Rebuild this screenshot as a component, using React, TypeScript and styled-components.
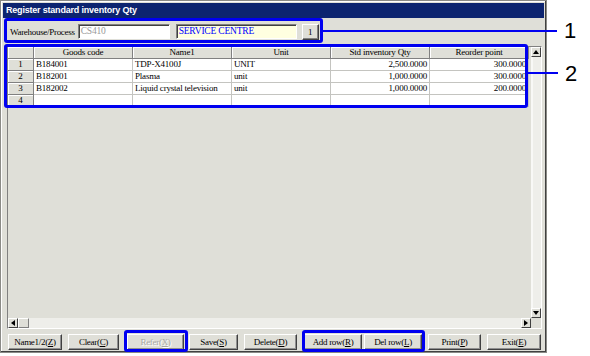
import { Fragment } from 'react';
import styled, { createGlobalStyle } from 'styled-components';

const GlobalStyle = createGlobalStyle`
  html, body {
    margin: 0;
    padding: 0;
    background: #ffffff;
  }
  * {
    box-sizing: border-box;
  }
`;

const GRAY = '#dfdfd8';
const CALLOUT = '#0000f0';

const Page = styled.div`
  position: relative;
  width: 590px;
  height: 356px;
  background: #ffffff;
  overflow: hidden;
`;

const Window = styled.div`
  display: flex;
  flex-direction: column;
  width: 547px;
  height: 353px;
  background: ${GRAY};
  border: 1px solid #8a8a86;
  box-shadow: inset -1px -1px 0 #404040, inset 1px 1px 0 #ffffff;
`;

const TitleBar = styled.div`
  height: 15px;
  margin: 2px 2px 0;
  padding-left: 3px;
  background: #0c2470;
  color: #ffffff;
  font-family: 'Liberation Sans', Arial, sans-serif;
  font-weight: bold;
  font-size: 9px;
  letter-spacing: -0.2px;
  line-height: 15px;
  white-space: nowrap;
`;

const FilterRow = styled.div`
  display: flex;
  align-items: center;
  height: 27px;
  padding-left: 9px;
`;

const Label = styled.span`
  font-family: 'Liberation Serif', 'Times New Roman', serif;
  font-size: 9px;
  letter-spacing: -0.3px;
  color: #000000;
  white-space: nowrap;
`;

const Field = styled.div<{ $w: number; $ml: number; $bg: string; $color: string }>`
  width: ${(p) => p.$w}px;
  height: 15px;
  margin-left: ${(p) => p.$ml}px;
  padding-left: 2px;
  background: ${(p) => p.$bg};
  color: ${(p) => p.$color};
  border-top: 1px solid #808080;
  border-left: 1px solid #808080;
  border-right: 1px solid #ffffff;
  border-bottom: 1px solid #ffffff;
  box-shadow: inset 1px 1px 0 #404040;
  font-family: 'Liberation Serif', 'Times New Roman', serif;
  font-size: 9.5px;
  letter-spacing: -0.2px;
  line-height: 13px;
  white-space: nowrap;
  overflow: hidden;
`;

const SmallButton = styled.div`
  width: 17px;
  height: 16px;
  margin-left: 5px;
  display: flex;
  align-items: center;
  justify-content: center;
  background: ${GRAY};
  border-top: 1px solid #ffffff;
  border-left: 1px solid #ffffff;
  border-right: 1px solid #404040;
  border-bottom: 1px solid #404040;
  box-shadow: inset -1px -1px 0 #808080;
  font-family: 'Liberation Serif', 'Times New Roman', serif;
  font-size: 9px;
`;

const GridFrame = styled.div`
  display: grid;
  grid-template-columns: 1fr 10px;
  grid-template-rows: 1fr 10px;
  width: 535px;
  height: 283px;
  margin: 1px 0 0 6px;
  border-top: 1px solid #808080;
  border-left: 1px solid #808080;
  border-right: 1px solid #ffffff;
  border-bottom: 1px solid #ffffff;
  background: ${GRAY};
`;

const Table = styled.div`
  display: grid;
  grid-template-columns: 26px repeat(5, 99px);
  grid-auto-rows: 12px;
  align-content: start;
  overflow: hidden;
  font-family: 'Liberation Serif', 'Times New Roman', serif;
  font-size: 9px;
  letter-spacing: -0.2px;
`;

const HeadCell = styled.div`
  background: ${GRAY};
  border-right: 1px solid #808080;
  border-bottom: 1px solid #808080;
  box-shadow: inset 1px 1px 0 #ffffff;
  text-align: center;
  line-height: 11px;
  white-space: nowrap;
  overflow: hidden;
`;

const Cell = styled.div<{ $right?: boolean }>`
  background: #ffffff;
  border-right: 1px solid #c4c4c0;
  border-bottom: 1px solid #c4c4c0;
  padding: 0 2px;
  text-align: ${(p) => (p.$right ? 'right' : 'left')};
  line-height: 11px;
  white-space: nowrap;
  overflow: hidden;
`;

const VScroll = styled.div`
  display: flex;
  flex-direction: column;
  justify-content: space-between;
  background: #eeeeea;
  box-shadow: inset 2px 0 0 #f8f8f6;
`;

const HScroll = styled.div`
  display: flex;
  align-items: stretch;
  background: #eeeeea;
`;

const Arrow = styled.div`
  width: 10px;
  height: 10px;
  flex: none;
  display: flex;
  align-items: center;
  justify-content: center;
  background: ${GRAY};
  border-top: 1px solid #ffffff;
  border-left: 1px solid #ffffff;
  border-right: 1px solid #404040;
  border-bottom: 1px solid #404040;
`;

const Thumb = styled.div`
  width: 11px;
  flex: none;
  background: ${GRAY};
  border-top: 1px solid #ffffff;
  border-left: 1px solid #ffffff;
  border-right: 1px solid #808080;
  border-bottom: 1px solid #808080;
`;

const Spacer = styled.div`
  flex: 1;
`;

const Corner = styled.div`
  background: ${GRAY};
`;

const ButtonBar = styled.div`
  display: flex;
  align-items: flex-start;
  padding-top: 5px;
  padding-left: 7px;
`;

const Button = styled.div<{ $w: number; $ml: number; $disabled?: boolean }>`
  width: ${(p) => p.$w}px;
  height: 16px;
  margin-left: ${(p) => p.$ml}px;
  display: flex;
  align-items: center;
  justify-content: center;
  background: ${GRAY};
  border-top: 1px solid #ffffff;
  border-left: 1px solid #ffffff;
  border-right: 1px solid #404040;
  border-bottom: 1px solid #404040;
  box-shadow: inset -1px -1px 0 #909090;
  color: ${(p) => (p.$disabled ? '#a8a8a4' : '#000000')};
  text-shadow: ${(p) => (p.$disabled ? '1px 1px 0 #ffffff' : 'none')};
  font-family: 'Liberation Serif', 'Times New Roman', serif;
  font-size: 9px;
  letter-spacing: -0.3px;
  white-space: nowrap;
  u {
    text-decoration: underline;
  }
`;

const Callout = styled.div<{ $x: number; $y: number; $w: number; $h: number }>`
  position: absolute;
  left: ${(p) => p.$x}px;
  top: ${(p) => p.$y}px;
  width: ${(p) => p.$w}px;
  height: ${(p) => p.$h}px;
  border: 3px solid ${CALLOUT};
  border-radius: 3px;
  pointer-events: none;
`;

const Leader = styled.div<{ $x: number; $y: number; $w: number }>`
  position: absolute;
  left: ${(p) => p.$x}px;
  top: ${(p) => p.$y}px;
  width: ${(p) => p.$w}px;
  height: 2px;
  background: ${CALLOUT};
`;

const Number = styled.div<{ $x: number; $y: number }>`
  position: absolute;
  left: ${(p) => p.$x}px;
  top: ${(p) => p.$y}px;
  font-family: 'Liberation Sans', Arial, sans-serif;
  font-size: 22px;
  line-height: 22px;
  color: #000000;
`;

const TriUp = () => (
  <svg width="6" height="4" viewBox="0 0 6 4">
    <polygon points="3,0 6,4 0,4" fill="#000" />
  </svg>
);
const TriDown = () => (
  <svg width="6" height="4" viewBox="0 0 6 4">
    <polygon points="0,0 6,0 3,4" fill="#000" />
  </svg>
);
const TriLeft = () => (
  <svg width="4" height="6" viewBox="0 0 4 6">
    <polygon points="4,0 4,6 0,3" fill="#000" />
  </svg>
);
const TriRight = () => (
  <svg width="4" height="6" viewBox="0 0 4 6">
    <polygon points="0,0 4,3 0,6" fill="#000" />
  </svg>
);

const columns = ['Goods code', 'Name1', 'Unit', 'Std inventory Qty', 'Reorder point'];

const rows = [
  ['B184001', 'TDP-X4100J', 'UNIT', '2,500.0000', '300.0000'],
  ['B182001', 'Plasma', 'unit', '1,000.0000', '300.0000'],
  ['B182002', 'Liquid crystal television', 'unit', '1,000.0000', '200.0000'],
  ['', '', '', '', ''],
];

const buttons = [
  { label: 'Name1/2(', key: 'Z', w: 54, ml: 0 },
  { label: 'Clear(', key: 'C', w: 51, ml: 6 },
  { label: 'Refer(', key: 'X', w: 57, ml: 8, disabled: true },
  { label: 'Save(', key: 'S', w: 49, ml: 5 },
  { label: 'Delete(', key: 'D', w: 53, ml: 6 },
  { label: 'Add row(', key: 'R', w: 58, ml: 7 },
  { label: 'Del row(', key: 'L', w: 58, ml: 2 },
  { label: 'Print(', key: 'P', w: 53, ml: 6 },
  { label: 'Exit(', key: 'E', w: 54, ml: 6 },
];

function App() {
  return (
    <>
      <GlobalStyle />
      <Page>
        <Window>
          <TitleBar>Register standard inventory Qty</TitleBar>
          <FilterRow>
            <Label>Warehouse/Process</Label>
            <Field $w={92} $ml={3} $bg="#ffffff" $color="#9a9a9a">
              CS410
            </Field>
            <Field $w={121} $ml={6} $bg="#ffffe0" $color="#0000ff">
              SERVICE CENTRE
            </Field>
            <SmallButton>1</SmallButton>
          </FilterRow>
          <GridFrame>
            <Table>
              <HeadCell />
              {columns.map((c) => (
                <HeadCell key={c}>{c}</HeadCell>
              ))}
              {rows.map((r, i) => (
                <Fragment key={'row' + i}>
                  <HeadCell>{i + 1}</HeadCell>
                  {r.map((v, j) => (
                    <Cell key={j} $right={j >= 3}>
                      {v}
                    </Cell>
                  ))}
                </Fragment>
              ))}
            </Table>
            <VScroll>
              <Arrow>
                <TriUp />
              </Arrow>
              <Arrow>
                <TriDown />
              </Arrow>
            </VScroll>
            <HScroll>
              <Arrow>
                <TriLeft />
              </Arrow>
              <Thumb />
              <Spacer />
              <Arrow>
                <TriRight />
              </Arrow>
            </HScroll>
            <Corner />
          </GridFrame>
          <ButtonBar>
            {buttons.map((b) => (
              <Button key={b.key} $w={b.w} $ml={b.ml} $disabled={b.disabled}>
                {b.label}
                <u>{b.key}</u>)
              </Button>
            ))}
          </ButtonBar>
        </Window>

        <Callout $x={4} $y={18} $w={319} $h={25} />
        <Callout $x={4} $y={44} $w={524} $h={64} />
        <Callout $x={124} $y={330} $w={64} $h={22} />
        <Callout $x={302} $y={330} $w={123} $h={22} />
        <Leader $x={323} $y={30} $w={234} />
        <Leader $x={528} $y={72} $w={30} />
        <Number $x={564} $y={20}>1</Number>
        <Number $x={565} $y={63}>2</Number>
      </Page>
    </>
  );
}

export default App;
